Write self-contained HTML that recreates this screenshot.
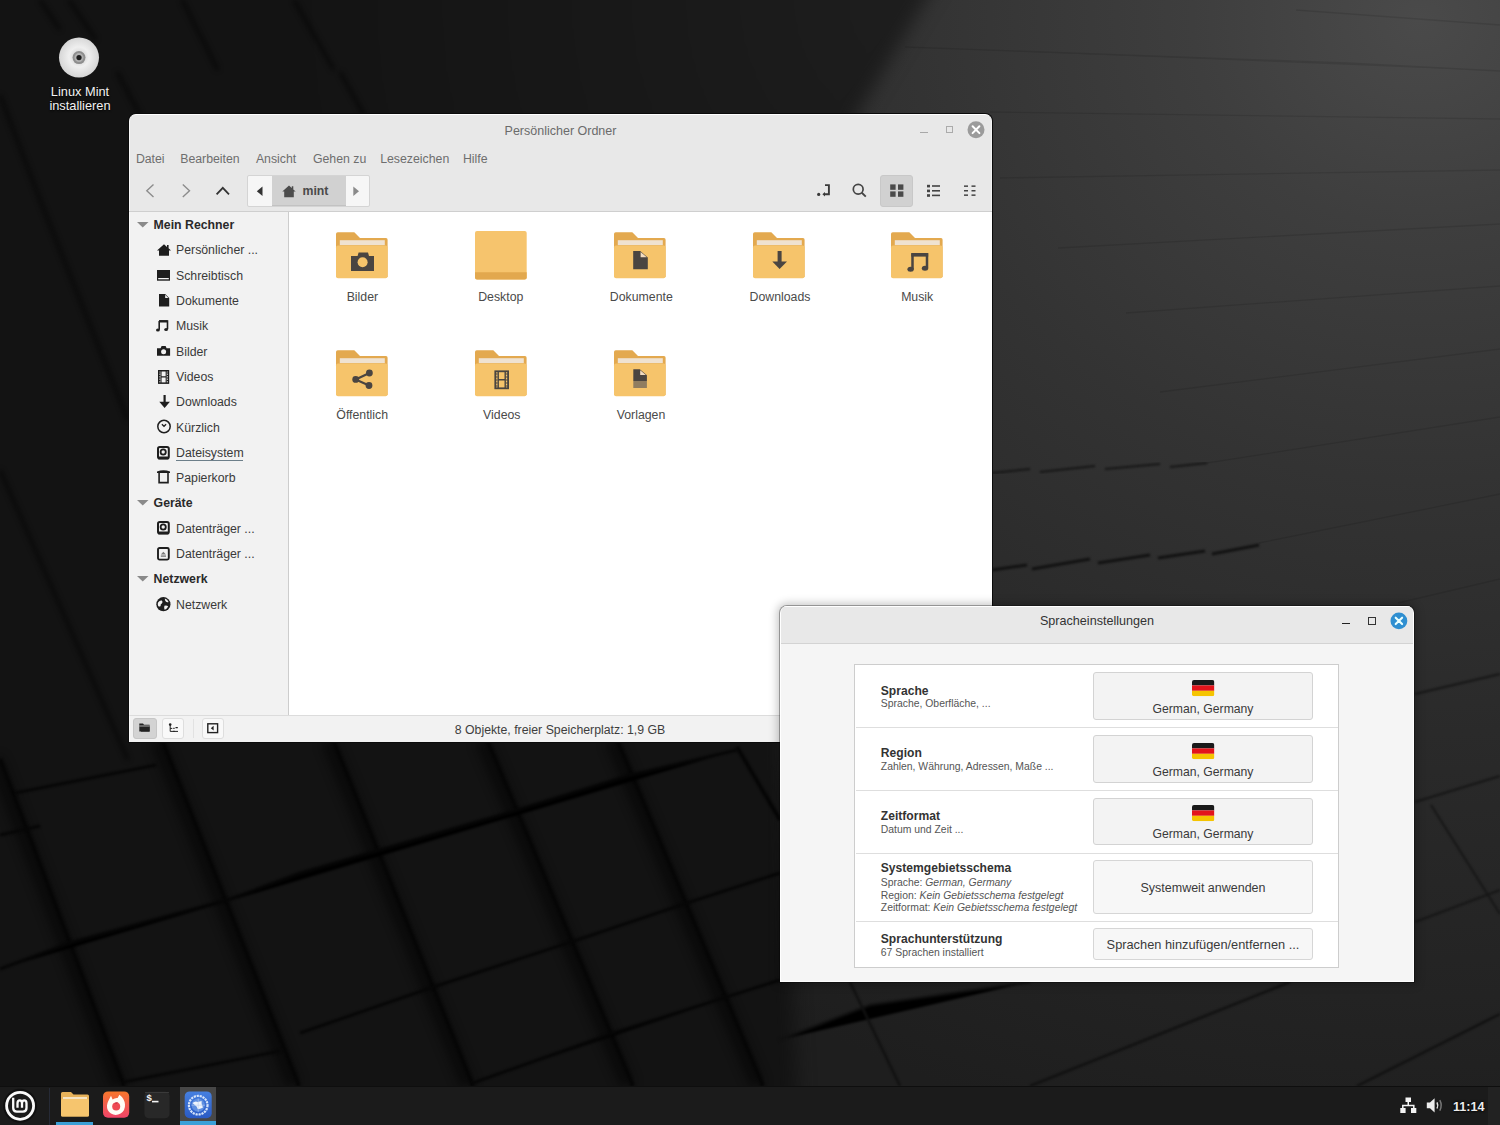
<!DOCTYPE html>
<html><head><meta charset="utf-8">
<style>
*{box-sizing:border-box;margin:0;padding:0}
html,body{width:1500px;height:1125px;overflow:hidden}
body{position:relative;background:#131313;font-family:"Liberation Sans",sans-serif;color:#3c3c3c}
.a{position:absolute}
.t{position:absolute;white-space:nowrap;line-height:1}
svg.i{position:absolute;overflow:visible}
</style></head><body>
<svg class="i" style="left:0;top:0" width="1500" height="1125" viewBox="0 0 1500 1125">
<defs>
<radialGradient id="g1" cx="1420" cy="20" r="1150" gradientUnits="userSpaceOnUse" gradientTransform="translate(1420 20) scale(1.1 1) translate(-1420 -20)">
<stop offset="0" stop-color="#4a4a4a"/>
<stop offset="0.18" stop-color="#3e3e3e"/>
<stop offset="0.4" stop-color="#333"/>
<stop offset="0.62" stop-color="#2a2a2a"/>
<stop offset="0.85" stop-color="#232323"/>
<stop offset="1" stop-color="#1e1e1e"/>
</radialGradient>
<radialGradient id="g0" cx="930" cy="0" r="650" gradientUnits="userSpaceOnUse">
<stop offset="0" stop-color="#1e1e1e"/>
<stop offset="0.5" stop-color="#181818"/>
<stop offset="1" stop-color="#131313"/>
</radialGradient>
<filter color-interpolation-filters="sRGB" id="bl" x="-20%" y="-20%" width="140%" height="140%"><feGaussianBlur stdDeviation="2.5"/></filter>
<filter color-interpolation-filters="sRGB" id="bl2" x="-50%" y="-50%" width="200%" height="200%"><feGaussianBlur stdDeviation="6"/></filter>
<filter color-interpolation-filters="sRGB" id="bl3" x="-10%" y="-10%" width="120%" height="120%"><feGaussianBlur stdDeviation="9"/></filter>
<filter color-interpolation-filters="sRGB" id="bl1"><feGaussianBlur stdDeviation="0.8"/></filter>
</defs>
<rect width="1500" height="1125" fill="url(#g1)"/>
<g filter="url(#bl3)"><path d="M-60 -60 L962 -60 L855 118 L780 742 L800 1150 L-60 1150 Z" fill="url(#g0)"/></g>
<!-- lower-left cube gaps: steep -->
<g stroke="#040404" stroke-width="12" filter="url(#bl2)" opacity="0.75">
<path d="M-5 759 L119 1086"/><path d="M157 740 L294 1086"/><path d="M328 740 L468 1086"/><path d="M482 740 L628 1086"/><path d="M612 740 L758 1086"/>
</g>
<g stroke="#060606" stroke-width="4" filter="url(#bl1)">
<path d="M0 759 L124 1086"/><path d="M162 740 L299 1086"/><path d="M333 740 L473 1086"/><path d="M487 740 L633 1086"/><path d="M617 740 L763 1086"/><path d="M737 747 L780 820"/>
</g>
<g stroke="#070707" stroke-width="3" filter="url(#bl1)">
<path d="M15 793 L156 765"/>
<path d="M0 969 L72 942 L230 899 L300 873 L500 815 L630 775 L737 750"/>
<path d="M300 1033 L433 987 L577 940 L687 903 L780 873"/>
<path d="M473 1083 L613 1033 L780 980"/>
<path d="M124 1082 L280 1051"/><path d="M0 835 L40 826"/>
</g>
<!-- top-left subtle diagonals -->
<g stroke="#080808" stroke-width="4" filter="url(#bl)" opacity="0.85">
<path d="M69 0 L96 40"/><path d="M117 72 L140 115"/><path d="M182 0 L218 70"/><path d="M294 0 L334 70"/><path d="M340 72 L364 115"/>
<path d="M0 95 L40 200 L128 420"/><path d="M0 470 L128 760"/><path d="M40 0 L60 30"/>
</g>
<!-- under settings: dark lines -->
<g stroke="#111" stroke-width="2.5" filter="url(#bl1)">
<path d="M779 1040 L870 1005 L1030 982"/><path d="M850 982 L900 1086"/><path d="M1030 1086 L1290 982"/><path d="M1357 1086 L1500 1014"/>
</g>
<!-- right strip lines -->
<g stroke="#161616" stroke-width="2" filter="url(#bl1)">
<path d="M1415 694 L1500 674"/><path d="M1415 802 L1500 776"/><path d="M1415 922 L1500 890"/><path d="M1431 805 L1500 914"/>
</g>
<!-- right side dashes -->
<g stroke="#121212" stroke-width="3" filter="url(#bl1)">
<path d="M992 570 L1027 565 M1032 569 L1090 559 M1098 563 L1150 555 M1158 558 L1205 551 M1212 554 L1259 545"/>
</g>
<g stroke="#161616" stroke-width="2" filter="url(#bl1)">
<path d="M992 473 L1030 469 M1040 472 L1095 466 M1105 469 L1160 464 M1170 467 L1207 463"/>
</g>
<g stroke="#000" stroke-width="1.3" opacity="0.1">
<path d="M905 47 L1347 63 L1500 71"/><path d="M1296 10 L1500 25"/><path d="M990 112 L1500 119"/><path d="M1000 178 L1500 170"/>
<path d="M1058 248 L1500 224"/><path d="M1126 313 L1500 286"/><path d="M1160 392 L1500 349"/><path d="M1207 463 L1500 417"/>
<path d="M1259 543 L1500 494"/><path d="M1398 603 L1500 579"/>
</g>
</svg>
<svg class="i" style="left:57px;top:35px" width="44" height="44" viewBox="0 0 44 44">
<defs><radialGradient id="cd" cx="22" cy="22" r="20" gradientUnits="userSpaceOnUse">
<stop offset="0.15" stop-color="#9a9a9a"/><stop offset="0.2" stop-color="#d8d8d8"/><stop offset="0.5" stop-color="#efefef"/><stop offset="1" stop-color="#d6d6d6"/></radialGradient></defs>
<circle cx="22" cy="22.6" r="20" fill="url(#cd)"/>
<circle cx="22" cy="22.6" r="6.5" fill="#8e8e8e"/>
<circle cx="22" cy="22.6" r="4.5" fill="#b0b0b0"/>
<circle cx="22" cy="22.6" r="2.6" fill="#1c1c1c"/>
</svg>
<div class="t" style="left:20.00px;top:85.56px;font-size:12.8px;color:#f2f2f2;width:120px;text-align:center;text-shadow:0 1px 2px #000;">Linux Mint</div>
<div class="t" style="left:20.00px;top:100.36px;font-size:12.8px;color:#f2f2f2;width:120px;text-align:center;text-shadow:0 1px 2px #000;">installieren</div>
<div class="a" style="left:128px;top:113px;width:865px;height:630px;border-radius:8px 8px 0 0;background:#0b0b0b"></div>
<div class="a" style="left:129px;top:114px;width:863px;height:628px;border-radius:7px 7px 0 0;background:#e8e8e8;border-top:1px solid #fff;border-left:1px solid #f6f6f6;border-right:1px solid #f2f2f2"></div>
<div class="t" style="left:410.50px;top:124.52px;font-size:12.5px;color:#6b6b6b;width:300px;text-align:center;">Persönlicher Ordner</div>
<div class="a" style="left:920px;top:131.6px;width:8px;height:1.2px;background:#a8a8a8"></div>
<div class="a" style="left:945.5px;top:126.3px;width:7px;height:7px;border:1px solid #ababab"></div>
<svg class="i" style="left:966.5px;top:121px" width="18" height="18" viewBox="0 0 18 18"><circle cx="9" cy="8.7" r="8.5" fill="#9b9b9b"/><path d="M5.6 5.3 L12.4 12.1 M12.4 5.3 L5.6 12.1" stroke="#fff" stroke-width="2" stroke-linecap="round"/></svg>
<div class="t" style="left:135.90px;top:152.99px;font-size:12.3px;color:#6e6e6e;">Datei</div>
<div class="t" style="left:180.20px;top:152.99px;font-size:12.3px;color:#6e6e6e;">Bearbeiten</div>
<div class="t" style="left:255.90px;top:152.99px;font-size:12.3px;color:#6e6e6e;">Ansicht</div>
<div class="t" style="left:312.90px;top:152.99px;font-size:12.3px;color:#6e6e6e;">Gehen zu</div>
<div class="t" style="left:380.20px;top:152.99px;font-size:12.3px;color:#6e6e6e;">Lesezeichen</div>
<div class="t" style="left:462.90px;top:152.99px;font-size:12.3px;color:#6e6e6e;">Hilfe</div>
<svg class="i" style="left:140px;top:180px" width="100" height="22" viewBox="0 0 100 22">
<path d="M13.5 4.5 L6.8 10.8 L13.5 17" fill="none" stroke="#8c8c8c" stroke-width="1.4"/>
<path d="M42.8 4.5 L49.5 10.8 L42.8 17" fill="none" stroke="#8c8c8c" stroke-width="1.4"/>
<path d="M76.6 14.3 L82.8 7.8 L89 14.3" fill="none" stroke="#333" stroke-width="1.8"/>
</svg>
<div class="a" style="left:246.5px;top:175px;width:123px;height:31.5px;border:1px solid #d4d4d4;border-radius:2px;background:#f6f6f6;overflow:hidden">
<div class="a" style="left:24.5px;top:0;width:74px;height:29.5px;background:#d1d1d1;border-bottom:1px solid #c2c2c2"></div>
</div>
<svg class="i" style="left:255px;top:185px" width="110" height="14" viewBox="0 0 110 14">
<path d="M7.5 1.5 L1.8 6.3 L7.5 11" fill="#333"/>
<path d="M98.3 1.5 L104 6.3 L98.3 11" fill="#8a8a8a"/>
</svg>
<svg class="i" style="left:282px;top:184.5px" width="14" height="13" viewBox="0 0 14 13">
<path d="M7 0.5 L0.3 6.6 L2.2 6.6 L2.2 12.3 L11.8 12.3 L11.8 6.6 L13.7 6.6 L11.3 4.4 L11.3 1.2 L9.8 1.2 L9.8 3.1 Z" fill="#4c4c4c"/>
</svg>
<div class="t" style="left:302.50px;top:185.39px;font-size:12.3px;color:#4a4a4a;font-weight:700;">mint</div>
<div class="a" style="left:880px;top:175px;width:32.5px;height:31.5px;background:#d1d1d1;border:1px solid #c8c8c8;border-radius:3px"></div>
<svg class="i" style="left:810px;top:180px" width="180" height="22" viewBox="0 0 180 22">
<!-- enter/location icon -->
<path d="M15 5.1 L18.9 5.1 L18.9 14.2 L14 14.2" fill="none" stroke="#3a3a3a" stroke-width="1.9"/>
<path d="M12.4 14.2 L15 11.9 L15 16.5 Z" fill="#3a3a3a"/>
<circle cx="8.7" cy="14.4" r="1.6" fill="#3a3a3a"/>
<!-- search -->
<circle cx="48.2" cy="9.2" r="4.9" fill="none" stroke="#444" stroke-width="1.7"/>
<path d="M51.8 12.8 L55.8 16.6" stroke="#444" stroke-width="1.9"/>
<!-- grid -->
<rect x="80.2" y="4.4" width="5.4" height="5.4" fill="#4a4a4a"/><rect x="88" y="4.4" width="5.4" height="5.4" fill="#4a4a4a"/>
<rect x="80.2" y="11.4" width="5.4" height="5.4" fill="#4a4a4a"/><rect x="88" y="11.4" width="5.4" height="5.4" fill="#4a4a4a"/>
<!-- list -->
<rect x="117" y="4.8" width="3" height="2.6" fill="#444"/><rect x="122" y="5.2" width="8" height="1.6" fill="#444"/>
<rect x="117" y="9.6" width="3" height="2.6" fill="#444"/><rect x="122" y="10" width="8" height="1.6" fill="#444"/>
<rect x="117" y="14.2" width="3" height="2.6" fill="#444"/><rect x="122" y="14.6" width="8" height="1.6" fill="#444"/>
<!-- compact -->
<rect x="154" y="5.4" width="4" height="1.5" fill="#444"/><rect x="161.5" y="5.4" width="4" height="1.5" fill="#444"/>
<rect x="154" y="10" width="4" height="1.5" fill="#444"/><rect x="161.5" y="10" width="4" height="1.5" fill="#444"/>
<rect x="154" y="14.4" width="4" height="1.5" fill="#444"/><rect x="161.5" y="14.4" width="4" height="1.5" fill="#444"/>
</svg>
<div class="a" style="left:129px;top:211px;width:863px;height:1px;background:#cfcfcf"></div>
<div class="a" style="left:129px;top:212px;width:159px;height:503px;background:#f2f2f2;border-left:1px solid #f8f8f8"></div>
<div class="a" style="left:288px;top:212px;width:1px;height:503px;background:#cdcdcd"></div>
<div class="a" style="left:289px;top:212px;width:703px;height:503px;background:#fff"></div>
<svg class="i" style="left:136.5px;top:222.0px" width="12" height="6" viewBox="0 0 12 6"><path d="M0 0 L11.5 0 L5.75 5.6 Z" fill="#8a8a8a"/></svg>
<div class="t" style="left:153.60px;top:219.19px;font-size:12.3px;color:#2a2a2a;font-weight:700;">Mein Rechner</div>
<svg class="i" style="left:156.6px;top:243.89999999999998px" width="14" height="12" viewBox="0 0 14 12"><path d="M7 0.3 L0 6.4 L2 6.4 L2 11.8 L12 11.8 L12 6.4 L14 6.4 L11.6 4.3 L11.6 1 L10 1 L10 2.9 Z" fill="#1e1e1e"/></svg>
<div class="t" style="left:176.00px;top:244.49px;font-size:12.3px;color:#3a3a3a;">Persönlicher ...</div>
<svg class="i" style="left:157px;top:269.9px" width="13" height="11" viewBox="0 0 13 11"><rect x="0" y="0" width="13" height="10.7" fill="#1e1e1e"/><rect x="1.2" y="8" width="10.6" height="1.3" fill="#f2f2f2"/></svg>
<div class="t" style="left:176.00px;top:269.79px;font-size:12.3px;color:#3a3a3a;">Schreibtisch</div>
<svg class="i" style="left:159px;top:294.3px" width="11" height="13" viewBox="0 0 11 13"><path d="M0 0 L6.2 0 L10.2 4 L10.2 12.6 L0 12.6 Z" fill="#1e1e1e"/><path d="M6.2 0.8 L9.4 4 L6.2 4 Z" fill="#f2f2f2"/></svg>
<div class="t" style="left:176.00px;top:295.09px;font-size:12.3px;color:#3a3a3a;">Dokumente</div>
<svg class="i" style="left:156.4px;top:320.2px" width="12" height="12" viewBox="0 0 12 12"><path d="M3.2 1 L11.5 1 L11.5 9.2" fill="none" stroke="#1e1e1e" stroke-width="1.6"/><path d="M3.2 1 L3.2 9.8" stroke="#1e1e1e" stroke-width="1.6"/><rect x="3" y="0.2" width="8.6" height="2.3" fill="#1e1e1e"/><ellipse cx="1.9" cy="10" rx="1.9" ry="1.5" fill="#1e1e1e"/><ellipse cx="10.1" cy="9.4" rx="1.9" ry="1.5" fill="#1e1e1e"/></svg>
<div class="t" style="left:176.00px;top:320.39px;font-size:12.3px;color:#3a3a3a;">Musik</div>
<svg class="i" style="left:156.9px;top:345.5px" width="14" height="10" viewBox="0 0 14 10"><path d="M0 2.2 L3.6 2.2 L4.6 0 L8.6 0 L9.6 2.2 L13.1 2.2 L13.1 9.8 L0 9.8 Z" fill="#1e1e1e"/><circle cx="6.6" cy="5.7" r="2.5" fill="#f2f2f2"/></svg>
<div class="t" style="left:176.00px;top:345.69px;font-size:12.3px;color:#3a3a3a;">Bilder</div>
<svg class="i" style="left:158px;top:370.2px" width="11" height="14" viewBox="0 0 11 14"><rect x="0.75" y="0.75" width="9.7" height="12.4" fill="none" stroke="#1e1e1e" stroke-width="1.5"/><path d="M3 0.8 L3 13 M8.2 0.8 L8.2 13 M3 6.9 L8.2 6.9" stroke="#1e1e1e" stroke-width="1.1"/><path d="M0.8 3 L2.4 3 M0.8 5.5 L2.4 5.5 M0.8 8 L2.4 8 M0.8 10.5 L2.4 10.5 M8.8 3 L10.4 3 M8.8 5.5 L10.4 5.5 M8.8 8 L10.4 8 M8.8 10.5 L10.4 10.5" stroke="#1e1e1e" stroke-width="1"/></svg>
<div class="t" style="left:176.00px;top:370.99px;font-size:12.3px;color:#3a3a3a;">Videos</div>
<svg class="i" style="left:158.5px;top:395px" width="11" height="13" viewBox="0 0 11 13"><path d="M5.6 0 L5.6 8.5" stroke="#1e1e1e" stroke-width="2.2"/><path d="M0.3 6.8 L5.6 12.9 L10.9 6.8 Z" fill="#1e1e1e"/></svg>
<div class="t" style="left:176.00px;top:396.29px;font-size:12.3px;color:#3a3a3a;">Downloads</div>
<svg class="i" style="left:157px;top:420px" width="14" height="13" viewBox="0 0 14 13"><circle cx="7" cy="6.5" r="6.2" fill="none" stroke="#1e1e1e" stroke-width="1.5"/><path d="M4.9 4.3 L7 6.3 L9.1 4.3" fill="none" stroke="#1e1e1e" stroke-width="1.3"/></svg>
<div class="t" style="left:176.00px;top:421.59px;font-size:12.3px;color:#3a3a3a;">Kürzlich</div>
<svg class="i" style="left:157.2px;top:445.5px" width="13" height="14" viewBox="0 0 13 14"><rect x="1" y="1" width="10.8" height="11.5" rx="1.8" fill="none" stroke="#1e1e1e" stroke-width="2"/><rect x="1" y="10.6" width="10.8" height="2.6" rx="1" fill="#1e1e1e"/><circle cx="6.2" cy="6" r="2.6" fill="none" stroke="#1e1e1e" stroke-width="1.8"/></svg>
<div class="t" style="left:176.00px;top:446.89px;font-size:12.3px;color:#3a3a3a;">Dateisystem</div>
<svg class="i" style="left:157px;top:470.3px" width="13" height="14" viewBox="0 0 13 14"><path d="M0 1.4 Q6.5 -0.7 13 1.4 L13 2.9 L0 2.9 Z" fill="#1e1e1e"/><path d="M2.1 2.8 L2.1 12.6 L11 12.6 L11 2.8" fill="none" stroke="#1e1e1e" stroke-width="1.6"/></svg>
<div class="t" style="left:176.00px;top:472.19px;font-size:12.3px;color:#3a3a3a;">Papierkorb</div>
<svg class="i" style="left:136.5px;top:500.3px" width="12" height="6" viewBox="0 0 12 6"><path d="M0 0 L11.5 0 L5.75 5.6 Z" fill="#8a8a8a"/></svg>
<div class="t" style="left:153.60px;top:497.49px;font-size:12.3px;color:#2a2a2a;font-weight:700;">Geräte</div>
<svg class="i" style="left:157.2px;top:521.1px" width="13" height="14" viewBox="0 0 13 14"><rect x="1" y="1" width="10.8" height="11.5" rx="1.8" fill="none" stroke="#1e1e1e" stroke-width="2"/><rect x="1" y="10.6" width="10.8" height="2.6" rx="1" fill="#1e1e1e"/><circle cx="6.2" cy="6" r="2.6" fill="none" stroke="#1e1e1e" stroke-width="1.8"/></svg>
<div class="t" style="left:176.00px;top:522.79px;font-size:12.3px;color:#3a3a3a;">Datenträger ...</div>
<svg class="i" style="left:157.2px;top:546.7px" width="13" height="14" viewBox="0 0 13 14"><rect x="1" y="1" width="10.8" height="11.6" rx="1.5" fill="none" stroke="#1e1e1e" stroke-width="1.9"/><path d="M3.8 7.6 L6.4 4.8 L9 7.6 Z" fill="#7a7a7a"/><rect x="3.8" y="8.4" width="5.2" height="1.4" fill="#7a7a7a"/></svg>
<div class="t" style="left:176.00px;top:548.09px;font-size:12.3px;color:#3a3a3a;">Datenträger ...</div>
<svg class="i" style="left:136.5px;top:576.2px" width="12" height="6" viewBox="0 0 12 6"><path d="M0 0 L11.5 0 L5.75 5.6 Z" fill="#8a8a8a"/></svg>
<div class="t" style="left:153.60px;top:573.39px;font-size:12.3px;color:#2a2a2a;font-weight:700;">Netzwerk</div>
<svg class="i" style="left:156.1px;top:596.9px" width="15" height="15" viewBox="0 0 15 15"><circle cx="7.4" cy="7.2" r="7.1" fill="#1e1e1e"/><path d="M2.2 5.2 Q4 3 5.8 3.6 Q7.4 5 5.8 6.6 Q4.2 7.2 4.6 9 Q3.4 10.2 2.2 9 Q1.2 7 2.2 5.2 Z" fill="#f2f2f2"/><path d="M8.8 1.6 Q11.6 2.6 12.6 5 Q11 5.6 10 4.8 Q8.6 3.4 8.8 1.6 Z" fill="#f2f2f2"/><path d="M8.4 8.8 Q10.8 8 12.2 9.6 Q10.6 12.4 8.6 12.8 Q7.8 10.6 8.4 8.8 Z" fill="#f2f2f2"/></svg>
<div class="t" style="left:176.00px;top:598.69px;font-size:12.3px;color:#3a3a3a;">Netzwerk</div>
<div class="a" style="left:176px;top:459.6px;width:67px;height:1.2px;background:#6d7f8a"></div>
<svg class="i" style="left:336.4px;top:231px" width="52" height="48" viewBox="0 0 52 48"><path d="M0 3 Q0 1.2 1.8 1.2 L18.3 1.2 L24 7 L50 7 Q51.6 7 51.6 8.8 L51.6 46 L0 46 Z" fill="#e3a94f"/>
<rect x="3.8" y="9.2" width="45" height="5" fill="#efe2d0"/>
<rect x="0" y="14.6" width="51.6" height="32.6" rx="2" fill="#f6c46b"/><path d="M15 25 L21.6 25 L22.6 21.5 L32 21.5 L33 25 L38 25 L38 40 L15 40 Z" fill="#4a4541"/><circle cx="26.6" cy="31.3" r="5" fill="#f6c46b"/></svg>
<div class="t" style="left:297.40px;top:290.69px;font-size:12.3px;color:#4a4a4a;width:130px;text-align:center;">Bilder</div>
<svg class="i" style="left:475.2px;top:231px" width="52" height="49" viewBox="0 0 52 49"><rect x="0" y="0" width="51.7" height="48.5" rx="2" fill="#f6c46d"/><path d="M0 41.2 L51.7 41.2 L51.7 46.5 Q51.7 48.5 49.7 48.5 L2 48.5 Q0 48.5 0 46.5 Z" fill="#e2a84e"/></svg>
<div class="t" style="left:435.80px;top:290.69px;font-size:12.3px;color:#4a4a4a;width:130px;text-align:center;">Desktop</div>
<svg class="i" style="left:614.1px;top:231px" width="52" height="48" viewBox="0 0 52 48"><path d="M0 3 Q0 1.2 1.8 1.2 L18.3 1.2 L24 7 L50 7 Q51.6 7 51.6 8.8 L51.6 46 L0 46 Z" fill="#e3a94f"/>
<rect x="3.8" y="9.2" width="45" height="5" fill="#efe2d0"/>
<rect x="0" y="14.6" width="51.6" height="32.6" rx="2" fill="#f6c46b"/><path d="M19.2 20 L26.2 20 L33.8 26.5 L33.8 38.3 L19.2 38.3 Z" fill="#4a4541"/><path d="M26.6 21 L32.8 26.2 L26.6 26.2 Z" fill="#f3dcc0"/></svg>
<div class="t" style="left:576.30px;top:290.69px;font-size:12.3px;color:#4a4a4a;width:130px;text-align:center;">Dokumente</div>
<svg class="i" style="left:752.7px;top:231px" width="52" height="48" viewBox="0 0 52 48"><path d="M0 3 Q0 1.2 1.8 1.2 L18.3 1.2 L24 7 L50 7 Q51.6 7 51.6 8.8 L51.6 46 L0 46 Z" fill="#e3a94f"/>
<rect x="3.8" y="9.2" width="45" height="5" fill="#efe2d0"/>
<rect x="0" y="14.6" width="51.6" height="32.6" rx="2" fill="#f6c46b"/><rect x="24.6" y="20" width="4" height="11" fill="#4a4541"/><path d="M19.3 30.5 L34 30.5 L26.6 38 Z" fill="#4a4541"/></svg>
<div class="t" style="left:715.00px;top:290.69px;font-size:12.3px;color:#4a4a4a;width:130px;text-align:center;">Downloads</div>
<svg class="i" style="left:891.4px;top:231px" width="52" height="48" viewBox="0 0 52 48"><path d="M0 3 Q0 1.2 1.8 1.2 L18.3 1.2 L24 7 L50 7 Q51.6 7 51.6 8.8 L51.6 46 L0 46 Z" fill="#e3a94f"/>
<rect x="3.8" y="9.2" width="45" height="5" fill="#efe2d0"/>
<rect x="0" y="14.6" width="51.6" height="32.6" rx="2" fill="#f6c46b"/><path d="M21.5 23.5 L36 23.5 L36 37" fill="none" stroke="#4a4541" stroke-width="2.5"/><path d="M21.5 22.3 L21.5 38" stroke="#4a4541" stroke-width="2.5"/><rect x="20.3" y="22" width="16.9" height="3.6" fill="#4a4541"/><ellipse cx="19.6" cy="38.2" rx="3.2" ry="2.5" fill="#4a4541"/><ellipse cx="34" cy="37.2" rx="3.2" ry="2.5" fill="#4a4541"/></svg>
<div class="t" style="left:852.20px;top:290.69px;font-size:12.3px;color:#4a4a4a;width:130px;text-align:center;">Musik</div>
<svg class="i" style="left:336.4px;top:349px" width="52" height="48" viewBox="0 0 52 48"><path d="M0 3 Q0 1.2 1.8 1.2 L18.3 1.2 L24 7 L50 7 Q51.6 7 51.6 8.8 L51.6 46 L0 46 Z" fill="#e3a94f"/>
<rect x="3.8" y="9.2" width="45" height="5" fill="#efe2d0"/>
<rect x="0" y="14.6" width="51.6" height="32.6" rx="2" fill="#f6c46b"/><path d="M33.4 24 L19.7 30.4 L33 36.5" fill="none" stroke="#4a4541" stroke-width="2.2"/><circle cx="33.4" cy="24" r="3.4" fill="#4a4541"/><circle cx="19.7" cy="30.4" r="3.4" fill="#4a4541"/><circle cx="33" cy="36.5" r="3.4" fill="#4a4541"/></svg>
<div class="t" style="left:297.20px;top:408.89px;font-size:12.3px;color:#4a4a4a;width:130px;text-align:center;">Öffentlich</div>
<svg class="i" style="left:475.2px;top:349px" width="52" height="48" viewBox="0 0 52 48"><path d="M0 3 Q0 1.2 1.8 1.2 L18.3 1.2 L24 7 L50 7 Q51.6 7 51.6 8.8 L51.6 46 L0 46 Z" fill="#e3a94f"/>
<rect x="3.8" y="9.2" width="45" height="5" fill="#efe2d0"/>
<rect x="0" y="14.6" width="51.6" height="32.6" rx="2" fill="#f6c46b"/><rect x="20.3" y="22.3" width="12.8" height="17" fill="none" stroke="#4a4541" stroke-width="1.8"/><path d="M23.2 22 L23.2 39.6 M30.2 22 L30.2 39.6 M23.2 30.8 L30.2 30.8" stroke="#4a4541" stroke-width="1.4"/><path d="M20.5 25 L22.6 25 M20.5 28 L22.6 28 M20.5 31 L22.6 31 M20.5 34 L22.6 34 M20.5 37 L22.6 37 M30.8 25 L32.9 25 M30.8 28 L32.9 28 M30.8 31 L32.9 31 M30.8 34 L32.9 34 M30.8 37 L32.9 37" stroke="#4a4541" stroke-width="1.2"/></svg>
<div class="t" style="left:436.80px;top:408.89px;font-size:12.3px;color:#4a4a4a;width:130px;text-align:center;">Videos</div>
<svg class="i" style="left:614.4px;top:349px" width="52" height="48" viewBox="0 0 52 48"><path d="M0 3 Q0 1.2 1.8 1.2 L18.3 1.2 L24 7 L50 7 Q51.6 7 51.6 8.8 L51.6 46 L0 46 Z" fill="#e3a94f"/>
<rect x="3.8" y="9.2" width="45" height="5" fill="#efe2d0"/>
<rect x="0" y="14.6" width="51.6" height="32.6" rx="2" fill="#f6c46b"/><path d="M19.3 20.3 L25.8 20.3 L32.9 26.3 L32.9 32 L19.3 32 Z" fill="#4a4541"/><path d="M26.2 21.3 L31.9 26 L26.2 26 Z" fill="#f3dcc0"/><rect x="19.3" y="32" width="13.6" height="7" fill="#6e655c" opacity="0.75"/></svg>
<div class="t" style="left:576.00px;top:408.89px;font-size:12.3px;color:#4a4a4a;width:130px;text-align:center;">Vorlagen</div>
<div class="a" style="left:129px;top:715px;width:863px;height:27px;background:#f2f2f2;border-top:1px solid #dcdcdc;border-left:1px solid #f8f8f8"></div>
<div class="a" style="left:133px;top:718px;width:24px;height:21px;background:#d3d3d3;border:1px solid #c6c6c6;border-radius:3px"></div>
<div class="a" style="left:162px;top:718px;width:22px;height:21px;background:#f9f9f9;border:1px solid #dedede;border-radius:3px"></div>
<div class="a" style="left:193px;top:719px;width:1px;height:19px;background:#e2e2e2"></div>
<div class="a" style="left:202px;top:718px;width:22px;height:21px;background:#f9f9f9;border:1px solid #dedede;border-radius:3px"></div>
<svg class="i" style="left:139px;top:723px" width="12" height="10" viewBox="0 0 12 10"><path d="M0.3 0.5 L4 0.5 L5 1.8 L10.6 1.8 L10.6 8.6 L0.3 8.6 Z" fill="#222"/><rect x="2" y="3.2" width="8.6" height="5.4" fill="#222"/><path d="M0.3 3 L10.6 3" stroke="#d3d3d3" stroke-width="0.8"/></svg>
<svg class="i" style="left:168px;top:723px" width="12" height="10" viewBox="0 0 12 10"><circle cx="2.2" cy="1.6" r="1.3" fill="#222"/><path d="M2.2 2 L2.2 8.4 L10 8.4 M2.2 5.4 L4.3 5.4" stroke="#222" stroke-width="1" fill="none"/><path d="M5.3 5.4 L6.6 5.4 M7.5 4.6 L9.8 4.6 M5.3 8.4 L6.6 8.4" stroke="#222" stroke-width="1.3"/></svg>
<svg class="i" style="left:207px;top:723px" width="12" height="11" viewBox="0 0 12 11"><rect x="0.8" y="0.8" width="9.8" height="8.8" fill="none" stroke="#222" stroke-width="1.4"/><path d="M6.6 2.8 L3.8 5.2 L6.6 7.6 Z" fill="#222"/></svg>
<div class="t" style="left:410.00px;top:723.79px;font-size:12.3px;color:#3e3e3e;width:300px;text-align:center;">8 Objekte, freier Speicherplatz: 1,9 GB</div>
<div class="a" style="left:779px;top:605px;width:636px;height:378px;border-radius:8px 8px 0 0;background:rgba(0,0,0,0.42);box-shadow:0 0 9px 2px rgba(0,0,0,0.22)"></div>
<div class="a" style="left:780px;top:606px;width:634px;height:376px;border-radius:7px 7px 0 0;background:#f5f5f5;border-left:1px solid #fff;border-right:1px solid #fff;border-bottom:1px solid #fdfdfd;overflow:hidden"><div class="a" style="left:0;top:0;width:634px;height:38px;background:#e8e8e8;border-top:1px solid #fff;border-bottom:1px solid #d3d3d3"></div></div>
<div class="t" style="left:947.00px;top:615.43px;font-size:12.6px;color:#333;width:300px;text-align:center;">Spracheinstellungen</div>
<div class="a" style="left:1342px;top:622.8px;width:8px;height:1.6px;background:#222"></div>
<div class="a" style="left:1368px;top:617px;width:8px;height:8px;border:1.3px solid #333"></div>
<svg class="i" style="left:1389.5px;top:612px" width="18" height="18" viewBox="0 0 18 18"><circle cx="8.9" cy="8.9" r="8.4" fill="#2f8fd1"/><path d="M5.7 5.7 L12.1 12.1 M12.1 5.7 L5.7 12.1" stroke="#eaffff" stroke-width="2.1" stroke-linecap="round"/></svg>
<div class="a" style="left:854px;top:664px;width:485px;height:304px;background:#fff;border:1px solid #cdcdcd"></div>
<div class="a" style="left:856px;top:726.8px;width:482px;height:1px;background:#dedede"></div>
<div class="a" style="left:856px;top:789.6px;width:482px;height:1px;background:#dedede"></div>
<div class="a" style="left:856px;top:852.5px;width:482px;height:1px;background:#dedede"></div>
<div class="a" style="left:856px;top:920.9px;width:482px;height:1px;background:#dedede"></div>
<div class="t" style="left:880.80px;top:684.56px;font-size:12.1px;color:#333;font-weight:700;">Sprache</div>
<div class="t" style="left:880.80px;top:699.20px;font-size:10.4px;color:#555;">Sprache, Oberfläche, ...</div>
<div class="t" style="left:880.80px;top:747.36px;font-size:12.1px;color:#333;font-weight:700;">Region</div>
<div class="t" style="left:880.80px;top:762.30px;font-size:10.4px;color:#555;">Zahlen, Währung, Adressen, Maße ...</div>
<div class="t" style="left:880.80px;top:810.26px;font-size:12.1px;color:#333;font-weight:700;">Zeitformat</div>
<div class="t" style="left:880.80px;top:825.00px;font-size:10.4px;color:#555;">Datum und Zeit ...</div>
<div class="t" style="left:880.80px;top:862.46px;font-size:12.1px;color:#333;font-weight:700;">Systemgebietsschema</div>
<div class="t" style="left:880.80px;top:877.60px;font-size:10.4px;color:#555;">Sprache: <i>German, Germany</i></div>
<div class="t" style="left:880.80px;top:890.50px;font-size:10.4px;color:#555;">Region: <i>Kein Gebietsschema festgelegt</i></div>
<div class="t" style="left:880.80px;top:903.30px;font-size:10.4px;color:#555;">Zeitformat: <i>Kein Gebietsschema festgelegt</i></div>
<div class="t" style="left:880.80px;top:932.96px;font-size:12.1px;color:#333;font-weight:700;">Sprachunterstützung</div>
<div class="t" style="left:880.80px;top:947.70px;font-size:10.4px;color:#555;">67 Sprachen installiert</div>
<div class="a" style="left:1093.3px;top:672.2px;width:219.5px;height:47.8px;background:#f3f3f3;border:1px solid #d3d3d3;border-radius:3px"></div>
<svg class="i" style="left:1191.6px;top:679.5px" width="23" height="17" viewBox="0 0 23 17"><defs><clipPath id="fc"><rect x="0" y="0" width="22.4" height="16.2" rx="2"/></clipPath></defs><g clip-path="url(#fc)"><rect x="0" y="0" width="22.4" height="5.4" fill="#1a1a1a"/><rect x="0" y="5.4" width="22.4" height="5.4" fill="#e3141b"/><rect x="0" y="10.8" width="22.4" height="5.4" fill="#f5c400"/></g></svg>
<div class="t" style="left:1103.00px;top:702.67px;font-size:12.2px;color:#3a3a3a;width:200px;text-align:center;">German, Germany</div>
<div class="a" style="left:1093.3px;top:735.2px;width:219.5px;height:47.4px;background:#f3f3f3;border:1px solid #d3d3d3;border-radius:3px"></div>
<svg class="i" style="left:1191.6px;top:742.5px" width="23" height="17" viewBox="0 0 23 17"><defs><clipPath id="fc"><rect x="0" y="0" width="22.4" height="16.2" rx="2"/></clipPath></defs><g clip-path="url(#fc)"><rect x="0" y="0" width="22.4" height="5.4" fill="#1a1a1a"/><rect x="0" y="5.4" width="22.4" height="5.4" fill="#e3141b"/><rect x="0" y="10.8" width="22.4" height="5.4" fill="#f5c400"/></g></svg>
<div class="t" style="left:1103.00px;top:765.67px;font-size:12.2px;color:#3a3a3a;width:200px;text-align:center;">German, Germany</div>
<div class="a" style="left:1093.3px;top:797.7px;width:219.5px;height:47.5px;background:#f3f3f3;border:1px solid #d3d3d3;border-radius:3px"></div>
<svg class="i" style="left:1191.6px;top:805.0px" width="23" height="17" viewBox="0 0 23 17"><defs><clipPath id="fc"><rect x="0" y="0" width="22.4" height="16.2" rx="2"/></clipPath></defs><g clip-path="url(#fc)"><rect x="0" y="0" width="22.4" height="5.4" fill="#1a1a1a"/><rect x="0" y="5.4" width="22.4" height="5.4" fill="#e3141b"/><rect x="0" y="10.8" width="22.4" height="5.4" fill="#f5c400"/></g></svg>
<div class="t" style="left:1103.00px;top:828.17px;font-size:12.2px;color:#3a3a3a;width:200px;text-align:center;">German, Germany</div>
<div class="a" style="left:1093.3px;top:860px;width:219.5px;height:54px;background:#f7f7f7;border:1px solid #d6d6d6;border-radius:3px"></div>
<div class="t" style="left:1103.00px;top:882.12px;font-size:12.5px;color:#3a3a3a;width:200px;text-align:center;">Systemweit anwenden</div>
<div class="a" style="left:1093.3px;top:928.4px;width:219.5px;height:31.6px;background:#f7f7f7;border:1px solid #d6d6d6;border-radius:3px"></div>
<div class="t" style="left:1093.00px;top:938.96px;font-size:12.8px;color:#3a3a3a;width:220px;text-align:center;">Sprachen hinzufügen/entfernen ...</div>
<div class="a" style="left:0;top:1086px;width:1500px;height:39px;background:#1b1b1b;border-top:1px solid #0e0e0e"></div>
<svg class="i" style="left:0;top:1086px" width="40" height="39" viewBox="0 0 40 39">
<circle cx="20.1" cy="19.8" r="16" fill="none" stroke="#0a0a0a" stroke-width="2" opacity="0.6"/>
<circle cx="20.1" cy="19.8" r="13.5" fill="none" stroke="#fafafa" stroke-width="2.8"/>
<path d="M13.2 11.8 L13.2 22 Q13.2 25.6 16.8 25.6 L23 25.6 Q26.5 25.6 26.5 22 L26.5 17.2 Q26.5 14.4 24.2 14.4 Q22 14.4 22 17.2 L22 21.8 M22 17.2 Q22 14.4 19.8 14.4 Q17.5 14.4 17.5 17.2 L17.5 21.8" fill="none" stroke="#fafafa" stroke-width="2.3"/>
</svg>
<div class="a" style="left:49px;top:1088px;width:1px;height:37px;background:#262a36"></div>
<svg class="i" style="left:60px;top:1091px" width="30" height="27" viewBox="0 0 30 27">
<path d="M1 2.5 Q1 1 2.5 1 L11 1 L13.5 3.5 L27.5 3.5 Q29 3.5 29 5 L29 24 Q29 25.5 27.5 25.5 L2.5 25.5 Q1 25.5 1 24 Z" fill="#e7b25a"/>
<rect x="3" y="6" width="24" height="3" fill="#f5e3c4"/>
<rect x="1" y="8" width="28" height="17.5" rx="1.5" fill="#f6c56e"/>
</svg>
<div class="a" style="left:56px;top:1122px;width:37px;height:3px;background:#3ba0d6"></div>
<svg class="i" style="left:102px;top:1090px" width="28" height="29" viewBox="0 0 28 29">
<defs><linearGradient id="ff" x1="0" y1="0" x2="0" y2="1"><stop offset="0" stop-color="#f7782c"/><stop offset="0.55" stop-color="#f25a50"/><stop offset="1" stop-color="#f04468"/></linearGradient></defs>
<rect x="1" y="1.4" width="26.2" height="26.4" rx="5" fill="url(#ff)"/>
<path d="M6.2 11.2 L9 5.8 L10.6 9.6 Q13 7.6 15.6 8 L17.4 4.8 Q22.6 8.6 23 14.6 Q23.4 20.6 18.6 23.6 Q13.6 26.2 9 23.6 Q4.6 20.8 5 15.6 Q5.2 13.2 6.2 11.2 Z" fill="#fffdf6"/>
<circle cx="14.2" cy="16.4" r="4" fill="#ef4a52"/>
<path d="M12.4 13.2 Q14 11.6 16.6 12.4 Q15 12.8 14.6 13.8 Z" fill="#c23040"/>
</svg>
<svg class="i" style="left:144px;top:1091px" width="26" height="28" viewBox="0 0 26 28">
<rect x="0.4" y="0.7" width="25.2" height="26.5" rx="4.5" fill="#282828"/>
<rect x="0.9" y="1" width="24.2" height="1" rx="0.5" fill="#3a3a3a"/>
<text x="2.4" y="9.6" font-family="Liberation Sans" font-weight="bold" font-size="9.5" fill="#f4f4f4">$</text>
<rect x="8" y="9.8" width="6.5" height="1.6" fill="#f4f4f4"/>
</svg>
<div class="a" style="left:180px;top:1087px;width:36px;height:38px;background:#474747"></div>
<div class="a" style="left:180px;top:1121.3px;width:36px;height:3.7px;background:#3aa0d8"></div>
<svg class="i" style="left:184px;top:1091px" width="28" height="28" viewBox="0 0 28 28">
<defs><linearGradient id="un" x1="0" y1="0" x2="0" y2="1"><stop offset="0" stop-color="#4680e0"/><stop offset="1" stop-color="#2a5ac4"/></linearGradient></defs>
<rect x="0.7" y="0.4" width="27" height="26.8" rx="5" fill="url(#un)"/>
<circle cx="14.2" cy="14.2" r="9.3" fill="none" stroke="#d6e4fa" stroke-width="2.2" stroke-dasharray="2.2 0.8"/>
<circle cx="14.2" cy="14.2" r="6.6" fill="#5f8fe0"/>
<path d="M8.4 12 Q11.5 9.5 13.6 11 L17.6 10 Q17 13.6 19 16.6 Q16 18.6 13.6 17.8 L12.6 15.4 Z" fill="#eef4fc"/>
<path d="M14.2 7.6 L14.2 20.8 M7.6 14.2 L20.8 14.2" stroke="#b8cdf0" stroke-width="0.6"/>
</svg>
<svg class="i" style="left:1400px;top:1097px" width="17" height="17" viewBox="0 0 17 17">
<rect x="5.5" y="0.5" width="5.5" height="4.5" fill="#f4f4f4"/>
<path d="M8.25 5 L8.25 8.4 M2.8 11 L2.8 8.4 L13.8 8.4 L13.8 11" fill="none" stroke="#f4f4f4" stroke-width="1.5"/>
<rect x="0.3" y="11" width="5.3" height="5" fill="#f4f4f4"/>
<rect x="11" y="11" width="5.3" height="5" fill="#f4f4f4"/>
</svg>
<svg class="i" style="left:1426px;top:1097px" width="18" height="17" viewBox="0 0 18 17">
<path d="M0.8 5.6 L4 5.6 L8.6 1.2 L8.6 15.6 L4 11.2 L0.8 11.2 Z" fill="#ececec"/>
<path d="M11 5.3 Q12.6 8.4 11 11.5" fill="none" stroke="#e0e0e0" stroke-width="1.5"/>
<path d="M13.8 3.2 Q16.6 8.4 13.8 13.6" fill="none" stroke="#777" stroke-width="1.5"/>
</svg>
<div class="t" style="left:1453px;top:1100.6px;font-size:12.6px;font-weight:bold;color:#ececec;text-shadow:0 0 2px #000,0 0 3px #000">11:14</div>
<div class="a" style="left:1488px;top:1087px;width:12px;height:38px;background:#222"></div>
</body></html>
